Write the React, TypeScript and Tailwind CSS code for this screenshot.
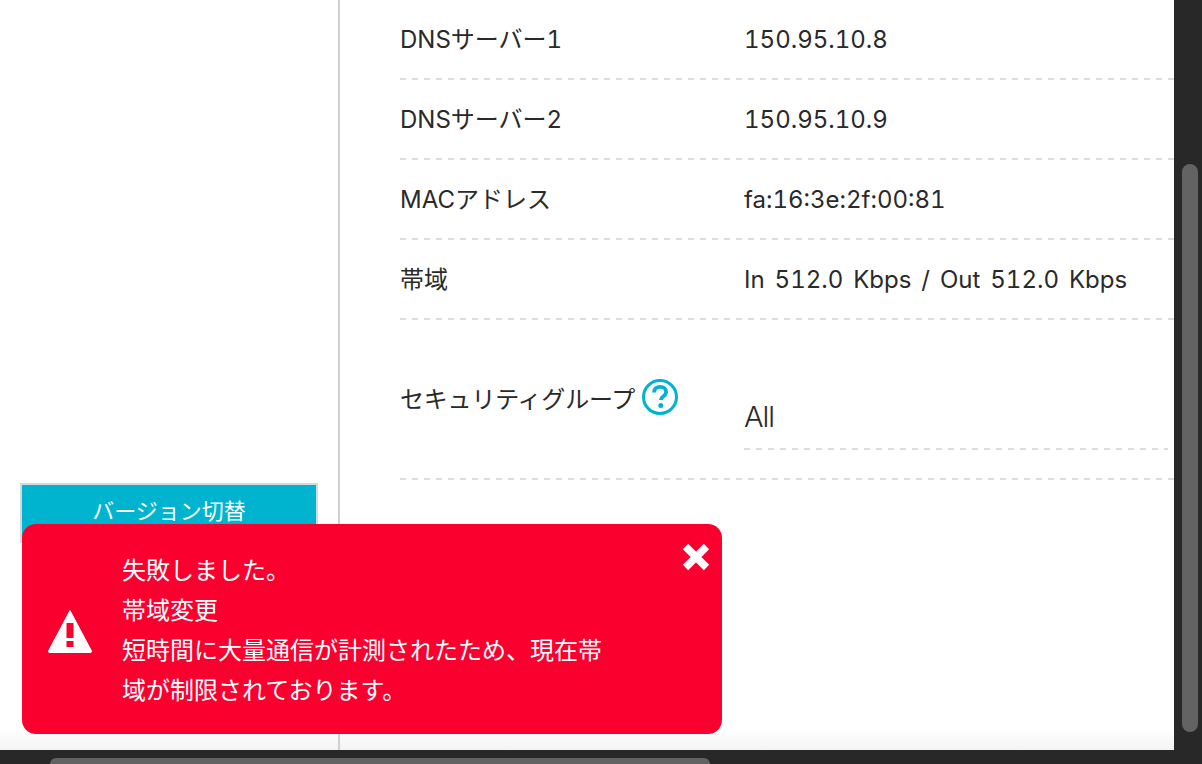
const rows = [
  { label: "DNSサーバー1", value: "150.95.10.8" },
  { label: "DNSサーバー2", value: "150.95.10.9" },
  { label: "MACアドレス", value: "fa:16:3e:2f:00:81" },
  { label: "帯域", value: "In 512.0 Kbps / Out 512.0 Kbps" },
];

function Dashed({ className = "" }: { className?: string }) {
  return (
    <div
      className={`h-[2px] bg-[repeating-linear-gradient(90deg,#dcdcdc_0_6px,transparent_6px_12px)] ${className}`}
    />
  );
}

export default function App() {
  return (
    <div className="relative w-[1202px] h-[764px] overflow-hidden bg-[#282828] font-['Inter','Noto_Sans_CJK_JP',sans-serif] text-[#2a2a2a]">
      <div className="flex h-[750px]">
        <div className="flex w-[1174px] shrink-0 bg-gradient-to-b from-white from-[97%] to-[#f3f3f3]">
          {/* Sidebar */}
          <aside className="w-[340px] shrink-0 border-r-2 border-[#d0d0d0] pt-[483px] pl-5">
            <div className="w-[298px] h-[60px] border-2 border-[#d0dcdf] bg-[#00b4d0] pt-[11px] text-center text-[22px] leading-[30px] text-white">
              バージョン切替
            </div>
          </aside>

          {/* Detail rows */}
          <main className="flex-1 pl-[60px]">
            {rows.map((row) => (
              <div key={row.label}>
                <div className="flex h-[78px] pt-[1px] items-center text-[24px] tabular-nums">
                  <div className="w-[344px] shrink-0">{row.label}</div>
                  <div className="[word-spacing:3.5px]">{row.value}</div>
                </div>
                <Dashed />
              </div>
            ))}
            <div className="flex h-[158px] text-[24px]">
              <div className="flex w-[344px] shrink-0 items-start pt-[62px]">
                <span className="leading-[36px] tracking-[-0.2px]">セキュリティグループ</span>
                <svg className="ml-[6px] -mt-[4px]" width="38" height="38" viewBox="0 0 38 38">
                  <circle cx="19" cy="19" r="16.500" fill="none" stroke="#00b4d0" strokeWidth="3" />
                  <path d="M13 14.500c0-3.600 2.700-5.700 6.200-5.700 3.400 0 5.900 2 5.900 5 0 2.300-1.300 3.600-3 4.700-1.600 1-2.200 1.800-2.200 3.500" fill="none" stroke="#00b4d0" strokeWidth="3.800" />
                  <circle cx="19.800" cy="27.500" r="2.500" fill="#00b4d0" />
                </svg>
              </div>
              <div className="w-[424px] pt-[75px]">
                <div className="h-[53px] text-[29px] font-light leading-[44px] tracking-[-1px]">All</div>
                <Dashed />
              </div>
            </div>
            <Dashed />
          </main>
        </div>

        {/* Vertical scrollbar */}
        <div className="flex-1 px-2 pt-[164px]">
          <div className="h-[568px] w-4 rounded-full bg-[#636363]" />
        </div>
      </div>

      {/* Horizontal scrollbar */}
      <div className="h-[14px] pt-2 pl-[50px]">
        <div className="h-[6px] w-[660px] rounded-t-lg bg-[#636363]" />
      </div>

      {/* Error toast */}
      <div className="absolute left-[22px] top-[524px] flex h-[210px] w-[700px] items-center rounded-[14px] bg-[#f9002f] text-white">
        <svg className="ml-[26px] mt-[4px] shrink-0" width="44" height="44" viewBox="0 0 44 44">
          <path d="M22 1.500 L43.500 42 a1 1 0 0 1 -1 1.500 H1.500 a1 1 0 0 1 -1 -1.500 Z" fill="#fff" stroke="#fff" strokeLinejoin="round" />
          <rect x="18.500" y="14" width="7" height="15" fill="#f9002f" />
          <rect x="18.500" y="32" width="7" height="6" fill="#f9002f" />
        </svg>
        <div className="ml-[30px] w-[484px] pt-[3px] text-[24px] leading-[40px]">
          <div>失敗しました。</div>
          <div>帯域変更</div>
          <div>短時間に大量通信が計測されたため、現在帯域が制限されております。</div>
        </div>
        <svg className="absolute right-[12px] top-[19px]" width="28" height="28" viewBox="0 0 28 28">
          <path d="M3.500 3.500 L24.500 24.500 M24.500 3.500 L3.500 24.500" stroke="#fff" strokeWidth="7.500" />
        </svg>
      </div>
    </div>
  );
}
